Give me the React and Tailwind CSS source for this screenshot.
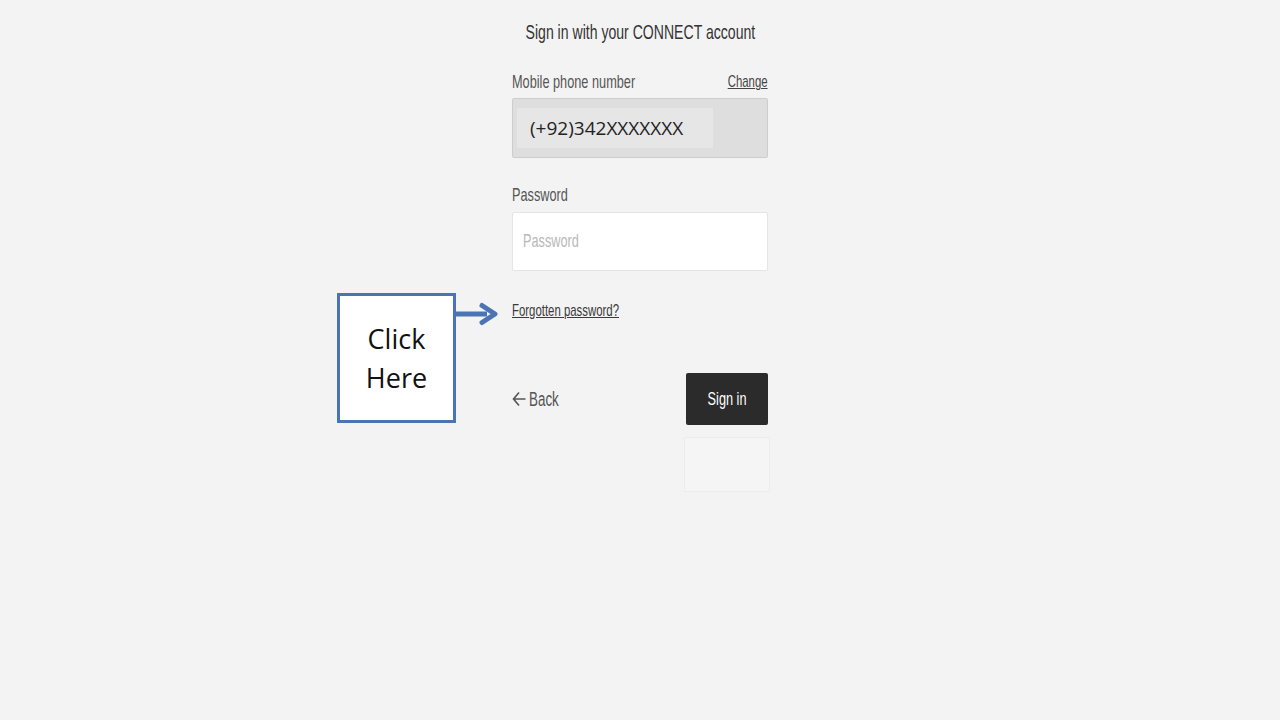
import React from "react";

const sans = { fontFamily: '"Liberation Sans", Arial, sans-serif' };
const calibri = { fontFamily: '"Open Sans", "Noto Sans", sans-serif' };

export default function App() {
  return (
    <div className="min-h-[720px] w-full bg-[#f3f3f3] flex justify-center" style={sans}>
      <div className="relative w-[256px] pt-[18px]">
        <div className="h-[28px] flex items-center justify-center whitespace-nowrap">
          <span className="inline-block origin-center scale-x-[0.67] text-[21px] text-[#333]">
            Sign in with your CONNECT account
          </span>
        </div>
        <div className="mt-[24px] h-[24px] flex items-center justify-between whitespace-nowrap">
          <span className="inline-block origin-left scale-x-[0.67] text-[19px] text-[#555]">Mobile phone number</span>
          <span className="inline-block origin-right scale-x-[0.67] text-[17px] underline text-[#444]">Change</span>
        </div>
        <div className="mt-[4px] h-[60px] bg-[#dedede] border border-[#cdcdcd] rounded-[2px] px-[4px] py-[9px]">
          <div className="h-[40px] w-[196px] bg-[#e6e6e6] flex items-center pl-[13px] text-[19px] text-[#222]" style={calibri}>
            (+92)342XXXXXXX
          </div>
        </div>
        <div className="mt-[25px] h-[24px] flex items-center whitespace-nowrap">
          <span className="inline-block origin-left scale-x-[0.67] text-[19px] text-[#555]">Password</span>
        </div>
        <div className="mt-[5px] h-[59px] bg-white border border-[#e4e4e4] rounded-[2px] flex items-center pl-[10px] whitespace-nowrap">
          <span className="inline-block origin-left scale-x-[0.67] text-[19px] text-[#b8b8b8]">Password</span>
        </div>
        <div className="mt-[30px] h-[20px] flex items-center whitespace-nowrap">
          <span className="inline-block origin-left scale-x-[0.67] text-[17px] text-[#3a3a3a] underline">Forgotten password?</span>
        </div>

        <div className="mt-[52px] flex items-center justify-between">
          <div className="flex items-center gap-[3px] whitespace-nowrap">
            <svg width="14" height="18" viewBox="0 0 14 18" fill="none" stroke="#555" strokeWidth="1.6">
              <path d="M13.5 9H1.5M7 2.5L1.5 9L7 15.5" />
            </svg>
            <span className="inline-block origin-left scale-x-[0.67] text-[20px] text-[#555]">Back</span>
          </div>
          <div className="w-[82px] h-[52px] bg-[#2b2b2b] rounded-[2px] flex items-center justify-center whitespace-nowrap">
            <span className="inline-block origin-center scale-x-[0.67] text-white text-[19px]">Sign in</span>
          </div>
        </div>
        <div className="mt-[12px] ml-auto mr-[-2px] w-[86px] h-[55px] bg-[#f5f5f5] border border-[#ececec]" />

        <div className="absolute left-[-175px] top-[293px] w-[119px] h-[130px] bg-white border-[3px] border-[#4a74b4] flex flex-col items-center justify-center text-[27px] leading-[39px] text-[#111]" style={calibri}>
          <span>Click</span>
          <span>Here</span>
        </div>
        <svg className="absolute left-[-57px] top-[302px]" width="44" height="24" viewBox="0 0 44 24">
          <path d="M0 12H32" stroke="#4a74b4" strokeWidth="5" />
          <path d="M27 3.5L40 12L27 20.5" fill="none" stroke="#4a74b4" strokeWidth="5" strokeLinejoin="round" strokeLinecap="round" />
        </svg>
      </div>
    </div>
  );
}
